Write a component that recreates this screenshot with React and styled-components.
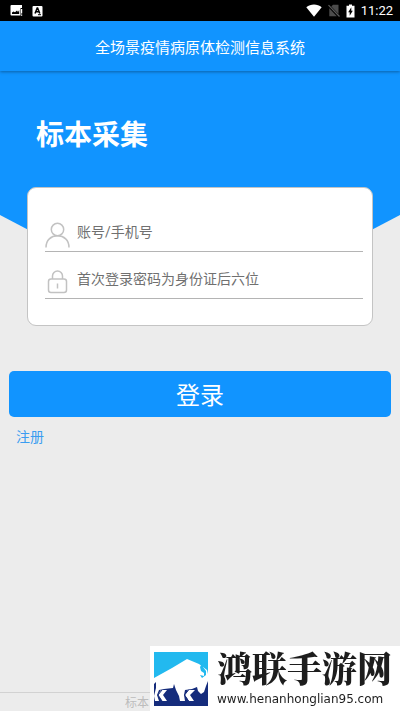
import React, { useState } from "react";
import styled, { createGlobalStyle } from "styled-components";

const GlobalStyle = createGlobalStyle`
  * {
    box-sizing: border-box;
  }

  body {
    margin: 0;
    background: #ececec;
    font-family: Roboto, "Noto Sans CJK SC", sans-serif;
  }
`;

const Page = styled.div`
  display: flex;
  flex-direction: column;
  min-height: 100vh;
`;

const StatusBar = styled.div`
  display: flex;
  align-items: center;
  justify-content: space-between;
  height: 21px;
  padding: 0 7px 0 10px;
  background: #000;
  color: #fff;
`;

const StatusGroup = styled.div`
  display: flex;
  align-items: center;
  gap: ${props => props.$gap}px;

  svg {
    display: block;
  }
`;

const Clock = styled.span`
  font-size: 13px;
  line-height: 20px;
`;

const TitleBar = styled.header`
  display: flex;
  align-items: center;
  justify-content: center;
  height: 50px;
  background: #1194ff;
  color: #fff;
  font-size: 15px;
  box-shadow: 0 1px 3px rgba(0, 0, 0, 0.35);
  z-index: 1;
`;

const Hero = styled.section`
  display: grid;

  > * {
    grid-area: 1 / 1;
  }
`;

const Backdrop = styled.div`
  height: 249px;
  background: #1194ff;
  clip-path: polygon(0 0, 100% 0, 100% 144px, 50% 100%, 0 144px);
`;

const HeroContent = styled.div`
  z-index: 1;
  padding: 44px 27px 0;
`;

const Heading = styled.h1`
  margin: 0 0 32px;
  padding-left: 9px;
  color: #fff;
  font-size: 28px;
  line-height: 42px;
  height: 40px;
  font-weight: 700;
`;

const Card = styled.div`
  padding: 17px 9px 26px 17px;
  border: 1px solid #c4c4c4;
  border-radius: 9px;
  background: #fff;
`;

const Field = styled.label`
  display: flex;
  align-items: center;
  gap: 7px;
  height: 47px;
  padding-top: 13px;
  border-bottom: 1px solid #b4b4b4;

  svg {
    flex: none;
  }
`;

const TextInput = styled.input`
  flex: 1;
  min-width: 0;
  height: 24px;
  margin-bottom: 6px;
  padding: 0;
  border: none;
  outline: none;
  background: none;
  font: inherit;
  font-size: 14px;
  color: #333;

  &::placeholder {
    color: #707070;
    opacity: 1;
  }
`;

const LoginButton = styled.button`
  height: 46px;
  margin: 45px 9px 0;
  padding: 4px 0 0;
  border: none;
  border-radius: 5px;
  background: #1194ff;
  color: #fff;
  font: inherit;
  font-size: 24px;
  line-height: 42px;
`;

const RegisterLink = styled.a`
  align-self: flex-start;
  margin: 10px 16px;
  color: #3a9df0;
  font-size: 14px;
  line-height: 20px;
  text-decoration: none;
`;

const Footer = styled.footer`
  height: 19px;
  margin-top: auto;
  padding-left: 125px;
  border-top: 1px solid #d2d2d2;
  color: #bcbcbc;
  font-size: 12px;
  line-height: 20px;
`;

const SiteBadge = styled.aside`
  position: fixed;
  right: 0;
  bottom: 0;
  z-index: 2;
  display: flex;
  gap: 9px;
  width: 250px;
  height: 65px;
  padding: 6px 4px;
  background: #fff;

  svg {
    flex: none;
  }
`;

const SiteText = styled.div`
  display: flex;
  flex-direction: column;
  gap: 8px;
  color: #1d1d1d;
  white-space: nowrap;
`;

const SiteName = styled.strong`
  font-family: "Noto Serif CJK SC", "Noto Sans CJK SC", serif;
  font-size: 35px;
  line-height: 31px;
  font-weight: 900;
`;

const SiteUrl = styled.span`
  font-family: "DejaVu Sans", sans-serif;
  font-size: 12px;
  line-height: 16px;
`;

function PictureIcon() {
  return (
    <svg width="13" height="13" viewBox="0 0 13 13">
      <path fill="#fff" d="M1.5 1H12v3h-1.500v7.500h-9A1 1 0 0 1 .5 10.500V2a1 1 0 0 1 1-1z" />
      <path fill="#000" d="M2 10V8.500l1.500-1 1.500.8L7 6.500 8 8l1.200-2V10z" />
      <path fill="#fff" d="M11 5h1.200v4.500H11zM11 10.500h1.200v1.300H11z" />
    </svg>
  );
}

function LetterIcon() {
  return (
    <svg width="11" height="12" viewBox="0 0 11 12">
      <rect x="0.500" y="1" width="10" height="10.500" rx="1" fill="#fff" />
      <path
        fill="none"
        stroke="#000"
        strokeWidth="1.500"
        d="M3 8.500l2.200-5.500h.4L7.800 8.500M4 6.800h3"
      />
      <path stroke="#000" d="M6 9.700h3" />
    </svg>
  );
}

function WifiIcon() {
  return (
    <svg width="16" height="13" viewBox="0 0 16 13">
      <path fill="#fff" d="M8 12.700.3 3.300C4.700-.4 11.300-.4 15.700 3.300z" />
    </svg>
  );
}

function NoSimIcon() {
  return (
    <svg width="12" height="13" viewBox="0 0 12 13">
      <path fill="#4c4c4c" d="M5 .8h5.500V10L3.300 2.500zM1.300 4.200l7.500 8H1.300z" />
      <path stroke="#5c5c5c" strokeWidth="1.200" d="M.5 1.200l11 11.300" />
    </svg>
  );
}

function BatteryIcon() {
  return (
    <svg width="9" height="14" viewBox="0 0 9 14">
      <path fill="#fff" d="M3 .5h3v1.300h2.500v11.700h-8V1.800H3z" />
      <path fill="#000" d="M5.300 3.300v3.500h1.500L3.700 11.800V8.300H2.200z" />
    </svg>
  );
}

function UserIcon() {
  return (
    <svg width="25" height="26" viewBox="0 0 25 26" fill="none" stroke="#c2c2c2" strokeWidth="1.500">
      <circle cx="12.500" cy="7.500" r="6.200" />
      <path d="M1 25.500C1 18 6 13.800 12.500 13.800S24 18 24 25.500" />
    </svg>
  );
}

function LockIcon() {
  return (
    <svg width="25" height="26" viewBox="0 0 25 26" fill="none" stroke="#c2c2c2" strokeWidth="1.500">
      <rect x="3.500" y="10" width="18" height="13.500" rx="2.500" />
      <path d="M7.500 10V7a5 5 0 0 1 10 0V10M12.500 14.500v5" />
    </svg>
  );
}

function BisonLogo() {
  return (
    <svg width="54" height="54" viewBox="0 0 54 54">
      <rect width="54" height="27" fill="#22b9ef" />
      <rect y="26" width="54" height="28" fill="#152c7c" />
      <path
        fill="#fff"
        d="M0 26L18 16 33 7 45 12 49 15 53 18 54 22V29L52 34 50 40 47 42 44 39 43 35 38 37 31 38 30 43 31 49H26L25 44 22 38 20 32 19 36 10 37 5 38 3 43 5 49H1L0 44 2 36 2 30 0 32z"
      />
      <path fill="#fff" d="M7 38h6L9 43l4 6H8l-4-6zM34 38h7l-5 5 4 6h-5l-4-6z" />
      <path fill="none" stroke="#152c7c" d="M8 38l-4 5 4 6M35 37.500l-4.500 5.500 4 6" />
      <path fill="#22b9ef" d="M49 10l-3 5 1 4 3 2 0 3-4-1 2 3 4-3 0-4-3-4zM50 10l4 7V10z" />
    </svg>
  );
}

function App() {
  const [account, setAccount] = useState("");
  const [password, setPassword] = useState("");

  return (
    <Page>
      <GlobalStyle />
      <StatusBar>
        <StatusGroup $gap={9}>
          <PictureIcon />
          <LetterIcon />
        </StatusGroup>
        <StatusGroup $gap={6}>
          <WifiIcon />
          <NoSimIcon />
          <BatteryIcon />
          <Clock>11:22</Clock>
        </StatusGroup>
      </StatusBar>
      <TitleBar>全场景疫情病原体检测信息系统</TitleBar>
      <Hero>
        <Backdrop />
        <HeroContent>
          <Heading>标本采集</Heading>
          <Card>
            <Field>
              <UserIcon />
              <TextInput
                type="text"
                aria-label="账号"
                placeholder="账号/手机号"
                value={account}
                onChange={e => setAccount(e.target.value)}
              />
            </Field>
            <Field>
              <LockIcon />
              <TextInput
                type="password"
                aria-label="密码"
                placeholder="首次登录密码为身份证后六位"
                value={password}
                onChange={e => setPassword(e.target.value)}
              />
            </Field>
          </Card>
        </HeroContent>
      </Hero>
      <LoginButton type="button">登录</LoginButton>
      <RegisterLink href="#register">注册</RegisterLink>
      <Footer>标本</Footer>
      <SiteBadge>
        <BisonLogo />
        <SiteText>
          <SiteName>鸿联手游网</SiteName>
          <SiteUrl>www.henanhonglian95.com</SiteUrl>
        </SiteText>
      </SiteBadge>
    </Page>
  );
}

export default App;
